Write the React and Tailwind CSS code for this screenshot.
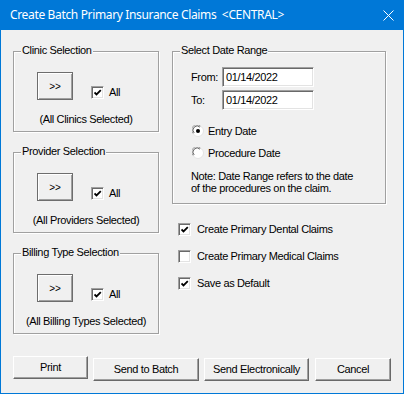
import React from 'react';

const bodyFont = { fontFamily: '"Liberation Sans", Arial, sans-serif' };

const CheckBox = ({ checked }) => (
  <span className="inline-block w-[13px] h-[13px] shrink-0 bg-white border-t border-l border-t-[#a0a0a0] border-l-[#a0a0a0] border-b border-r border-b-white border-r-white shadow-[inset_1px_1px_0_#696969,inset_-1px_-1px_0_#e3e3e3] relative">
    {checked && (
      <svg className="absolute left-[2px] top-[2px]" width="8" height="8" viewBox="0 0 8 8">
        <path d="M0.5 3.5 L2.5 5.5 L6.8 1.2" fill="none" stroke="#000" strokeWidth="1.8" />
      </svg>
    )}
  </span>
);

const Radio = ({ checked }) => (
  <svg width="12" height="12" viewBox="0 0 12 12" className="shrink-0">
    <circle cx="6" cy="6" r="5.5" fill="#fff" stroke="#e3e3e3" />
    <path d="M1.2 8.5 A5 5 0 0 1 8.5 1.2" fill="none" stroke="#a0a0a0" strokeWidth="1" />
    <path d="M2.2 8 A4 4 0 0 1 8 2.2" fill="none" stroke="#696969" strokeWidth="1" />
    {checked && <circle cx="6" cy="6" r="2" fill="#000" />}
  </svg>
);

const SmallButton = ({ children }) => (
  <button className="w-[36px] h-[28px] bg-[#f0f0f0] border border-[#6d6d6d] shadow-[inset_1px_1px_0_#fff,inset_-1px_-1px_0_#a0a0a0] text-[10px] leading-[13px] text-black">
    {children}
  </button>
);

const DialogButton = ({ children, width }) => (
  <button
    className={`h-[23px] ${width} bg-[#f0f0f0] border border-t-white border-l-white border-r-[#696969] border-b-[#696969] shadow-[inset_-1px_-1px_0_#a0a0a0] text-[11px] leading-[13px] tracking-[-0.35px] text-black`}
  >
    {children}
  </button>
);

const GroupBox = ({ title, className, children }) => (
  <div className={`relative border border-[#a0a0a0] shadow-[1px_1px_0_#fff,inset_1px_1px_0_#fff] ${className}`}>
    <span className="absolute top-[-8px] left-[7px] px-[1px] bg-[#f0f0f0] text-[11px] leading-[13px] tracking-[-0.35px] whitespace-nowrap">
      {title}
    </span>
    {children}
  </div>
);

const SelectionGroup = ({ title, summary }) => (
  <GroupBox title={title} className="h-[81px]">
    <div className="flex items-start pt-[20px] pl-[23px]">
      <SmallButton>&gt;&gt;</SmallButton>
      <label className="flex items-center gap-[5px] ml-[18px] mt-[14px]">
        <CheckBox checked />
        <span className="text-[11px] leading-[13px] tracking-[-0.35px]">All</span>
      </label>
    </div>
    <div className="mt-[13px] text-center text-[11px] leading-[13px] tracking-[-0.35px] whitespace-nowrap">{summary}</div>
  </GroupBox>
);

const DateInput = ({ value }) => (
  <div className="w-[92px] h-[20px] bg-white border-t border-l border-t-[#a0a0a0] border-l-[#a0a0a0] border-b border-r border-b-white border-r-white shadow-[inset_1px_1px_0_#696969,inset_-1px_-1px_0_#e3e3e3] pl-[3px] text-[11px] leading-[18px] tracking-[-0.35px]">
    {value}
  </div>
);

const App = () => {
  return (
    <div className="w-[404px] h-[394px] flex flex-col bg-[#f0f0f0] border-x border-b border-[#0078d7] text-black" style={bodyFont}>
      <div className="h-[30px] -mx-[1px] bg-[#0078d7] flex items-center justify-between pl-[10px] pr-[10px] shrink-0">
        <span className="text-white text-[12px] leading-[16px] tracking-[-0.35px] whitespace-pre" style={{ fontFamily: '"Segoe UI", "Noto Sans", sans-serif' }}>
          Create Batch Primary Insurance Claims  &lt;CENTRAL&gt;
        </span>
        <svg width="11" height="11" viewBox="0 0 11 11">
          <path d="M0.5 0.5 L10.5 10.5 M10.5 0.5 L0.5 10.5" stroke="#fff" strokeWidth="1" />
        </svg>
      </div>

      <div className="flex pt-[21px] pl-[12px]">
        <div className="w-[146px] flex flex-col gap-[20px]">
          <SelectionGroup title="Clinic Selection" summary="(All Clinics Selected)" />
          <SelectionGroup title="Provider Selection" summary="(All Providers Selected)" />
          <SelectionGroup title="Billing Type Selection" summary="(All Billing Types Selected)" />
        </div>

        <div className="w-[214px] ml-[13px] flex flex-col">
          <GroupBox title="Select Date Range" className="h-[153px]">
            <div className="pt-[15px] pl-[18px] flex flex-col gap-[3px]">
              <div className="flex items-center">
                <span className="w-[31px] text-[11px] leading-[13px] tracking-[-0.35px]">From:</span>
                <DateInput value="01/14/2022" />
              </div>
              <div className="flex items-center">
                <span className="w-[31px] text-[11px] leading-[13px] tracking-[-0.35px]">To:</span>
                <DateInput value="01/14/2022" />
              </div>
            </div>
            <div className="pl-[19px] mt-[15px] flex flex-col gap-[10px]">
              <div className="flex items-center gap-[4px] h-[12px]">
                <Radio checked />
                <span className="text-[11px] leading-[13px] tracking-[-0.35px]">Entry Date</span>
              </div>
              <div className="flex items-center gap-[4px] h-[12px]">
                <Radio />
                <span className="text-[11px] leading-[13px] tracking-[-0.35px]">Procedure Date</span>
              </div>
            </div>
            <div className="pl-[18px] mt-[11px] text-[11px] leading-[12px] tracking-[-0.35px]">
              Note: Date Range refers to the date<br />of the procedures on the claim.
            </div>
          </GroupBox>

          <div className="flex flex-col gap-[14px] mt-[19px] pl-[6px]">
            <label className="flex items-center gap-[6px]">
              <CheckBox checked />
              <span className="text-[11px] leading-[13px] tracking-[-0.35px]">Create Primary Dental Claims</span>
            </label>
            <label className="flex items-center gap-[6px]">
              <CheckBox />
              <span className="text-[11px] leading-[13px] tracking-[-0.35px]">Create Primary Medical Claims</span>
            </label>
            <label className="flex items-center gap-[6px]">
              <CheckBox checked />
              <span className="text-[11px] leading-[13px] tracking-[-0.35px]">Save as Default</span>
            </label>
          </div>
        </div>
      </div>

      <div className="flex pl-[12px] mt-[22px]">
        <DialogButton width="w-[75px]">Print</DialogButton>
        <div className="ml-[5px]"><DialogButton width="w-[106px]">Send to Batch</DialogButton></div>
        <div className="ml-[5px]"><DialogButton width="w-[105px]">Send Electronically</DialogButton></div>
        <div className="ml-[6px]"><DialogButton width="w-[76px]">Cancel</DialogButton></div>
      </div>
    </div>
  );
};

export default App;
